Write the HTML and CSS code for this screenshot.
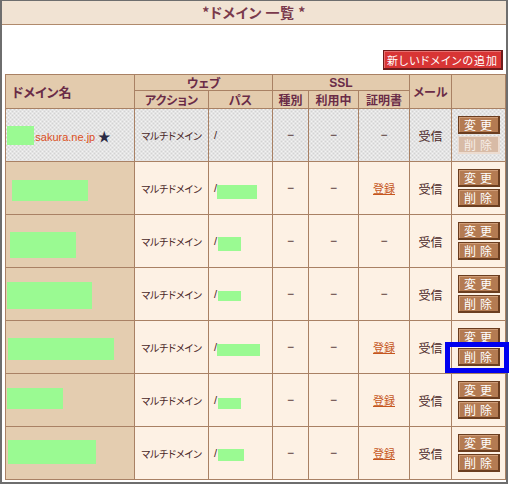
FILE: index.html
```html
<!DOCTYPE html>
<html lang="ja">
<head>
<meta charset="utf-8">
<title>ドメイン一覧</title>
<link rel="stylesheet" href="styles.css">
</head>
<body>
<div class="frame">
  <div class="title">*ドメイン 一覧 *</div>
  <div class="content">
    <div class="actions"><button class="btn-add">新しいドメインの追加</button></div>
    <table class="domains">
      <colgroup>
        <col class="c-name"><col class="c-act"><col class="c-path"><col class="c-type"><col class="c-use"><col class="c-cert"><col class="c-mail"><col class="c-ops">
      </colgroup>
      <thead>
        <tr class="h1">
          <th rowspan="2" class="th-name">ドメイン名</th>
          <th colspan="2">ウェブ</th>
          <th colspan="3" class="ssl">SSL</th>
          <th rowspan="2">メール</th>
          <th rowspan="2"></th>
        </tr>
        <tr class="h2">
          <th>アクション</th><th>パス</th><th>種別</th><th>利用中</th><th>証明書</th>
        </tr>
      </thead>
      <tbody>
        <tr class="primary">
          <td class="name"><span class="dom">www.sakura.ne.jp</span> <span class="star">★</span></td>
          <td class="act">マルチドメイン</td>
          <td class="path">/</td>
          <td class="dash">−</td><td class="dash">−</td><td class="dash">−</td>
          <td class="mail">受信</td>
          <td class="ops"><button class="btn">変更</button><button class="btn disabled">削除</button></td>
        </tr>
        <tr>
          <td class="name"></td>
          <td class="act">マルチドメイン</td>
          <td class="path">/</td>
          <td class="dash">−</td><td class="dash">−</td><td class="cert"><a href="#">登録</a></td>
          <td class="mail">受信</td>
          <td class="ops"><button class="btn">変更</button><button class="btn">削除</button></td>
        </tr>
        <tr>
          <td class="name"></td>
          <td class="act">マルチドメイン</td>
          <td class="path">/</td>
          <td class="dash">−</td><td class="dash">−</td><td class="dash">−</td>
          <td class="mail">受信</td>
          <td class="ops"><button class="btn">変更</button><button class="btn">削除</button></td>
        </tr>
        <tr>
          <td class="name"></td>
          <td class="act">マルチドメイン</td>
          <td class="path">/</td>
          <td class="dash">−</td><td class="dash">−</td><td class="dash">−</td>
          <td class="mail">受信</td>
          <td class="ops"><button class="btn">変更</button><button class="btn">削除</button></td>
        </tr>
        <tr>
          <td class="name"></td>
          <td class="act">マルチドメイン</td>
          <td class="path">/</td>
          <td class="dash">−</td><td class="dash">−</td><td class="cert"><a href="#">登録</a></td>
          <td class="mail">受信</td>
          <td class="ops"><button class="btn">変更</button><button class="btn">削除</button></td>
        </tr>
        <tr>
          <td class="name"></td>
          <td class="act">マルチドメイン</td>
          <td class="path">/</td>
          <td class="dash">−</td><td class="dash">−</td><td class="cert"><a href="#">登録</a></td>
          <td class="mail">受信</td>
          <td class="ops"><button class="btn">変更</button><button class="btn">削除</button></td>
        </tr>
        <tr>
          <td class="name"></td>
          <td class="act">マルチドメイン</td>
          <td class="path">/</td>
          <td class="dash">−</td><td class="dash">−</td><td class="cert"><a href="#">登録</a></td>
          <td class="mail">受信</td>
          <td class="ops"><button class="btn">変更</button><button class="btn">削除</button></td>
        </tr>
      </tbody>
    </table>
  </div>
</div>

<div class="redact" style="left:7px;top:126px;width:27px;height:19px"></div>
<div class="redact" style="left:12px;top:180px;width:76px;height:21px"></div>
<div class="redact" style="left:217px;top:185px;width:40px;height:14px"></div>
<div class="redact" style="left:10px;top:232px;width:66px;height:26px"></div>
<div class="redact" style="left:218px;top:237px;width:23px;height:14px"></div>
<div class="redact" style="left:7px;top:282px;width:85px;height:27px"></div>
<div class="redact" style="left:218px;top:291px;width:23px;height:10px"></div>
<div class="redact" style="left:8px;top:338px;width:106px;height:22px"></div>
<div class="redact" style="left:217px;top:344px;width:43px;height:12px"></div>
<div class="redact" style="left:7px;top:388px;width:56px;height:21px"></div>
<div class="redact" style="left:218px;top:398px;width:23px;height:11px"></div>
<div class="redact" style="left:8px;top:440px;width:88px;height:24px"></div>
<div class="redact" style="left:218px;top:449px;width:26px;height:12px"></div>

<div class="highlight"></div>
</body>
</html>
```

FILE: styles.css
```css
html, body {
  margin: 0;
  padding: 0;
  background: #ffffff;
}
body {
  position: relative;
  width: 509px;
  height: 484px;
  overflow: hidden;
  font-family: "Noto Sans CJK JP", "Liberation Sans", sans-serif;
  font-feature-settings: "palt";
}
.frame {
  width: 508px;
  height: 484px;
  box-sizing: border-box;
  border-style: solid;
  border-color: #6e6e6e;
  border-width: 1px 2px 2px 2px;
  background: #ffffff;
}
.title {
  height: 23px;
  border-bottom: 1px solid #b08a6c;
  background: #f1e3d3;
  color: #7a3a4c;
  font-weight: bold;
  font-size: 14px;
  line-height: 23px;
  text-align: center;
  letter-spacing: 0.5px;
}
.content {
  padding: 25px 1px 0 3px;
}
.actions {
  display: flex;
  justify-content: flex-end;
  padding-right: 2px;
  margin-bottom: 4px;
}
.btn-add {
  height: 20px;
  width: 120px;
  box-sizing: border-box;
  margin: 0;
  padding: 0;
  background: #d83535;
  color: #ffffff;
  border: 1px solid #6e1c1c;
  border-right-width: 2px;
  border-bottom-width: 2px;
  box-shadow: inset 1px 1px 0 #e87070;
  font-family: "Noto Sans CJK JP", sans-serif;
  font-feature-settings: "palt";
  font-size: 11px;
  letter-spacing: 1px;
  line-height: 16px;
  white-space: nowrap;
  text-align: center;
}
.domains {
  border-collapse: collapse;
  table-layout: fixed;
  width: 500px;
}
.c-name { width: 129px; }
.c-act { width: 74px; }
.c-path { width: 64px; }
.c-type { width: 36px; }
.c-use { width: 50px; }
.c-cert { width: 51px; }
.c-mail { width: 42px; }
.c-ops { width: 54px; }
.domains th, .domains td {
  border: 1px solid #a98164;
  padding: 0;
  vertical-align: middle;
}
.domains th {
  background: #e3cbad;
  color: #6a2b47;
  font-weight: bold;
  font-size: 12px;
  text-align: center;
  line-height: 14px;
}
.domains .h1 { height: 16px; }
.domains .h2 { height: 18px; }
.domains th.th-name {
  text-align: left;
  padding-left: 6px;
  font-size: 13px;
}
.domains th.ssl {
  font-family: "Liberation Sans", sans-serif;
  font-size: 12px;
}
.domains tbody tr { height: 53px; }
.domains td {
  background: #fdf1e4;
  color: #4a2828;
  font-size: 11px;
  text-align: center;
}
.domains td.act {
  font-size: 10px;
  letter-spacing: -0.2px;
}
.domains td.name {
  background: #e4cdb0;
  text-align: left;
  padding-left: 3px;
}
.domains td.path {
  text-align: left;
  padding-left: 5px;
  font-family: "Liberation Sans", sans-serif;
}
.domains td.dash {
  font-family: "Liberation Sans", sans-serif;
  font-size: 12px;
}
.domains td.mail { font-size: 12px; }
.domains td.cert a {
  color: #c5561d;
  text-decoration: underline;
  font-size: 11px;
}
.domains tr.primary td {
  background-color: #f3f3f3;
  background-image: radial-gradient(circle, #d2d2d2 0.7px, transparent 0.9px), radial-gradient(circle, #d2d2d2 0.7px, transparent 0.9px);
  background-size: 4px 4px, 4px 4px;
  background-position: 0 0, 2px 2px;
}
.dom {
  font-family: "Liberation Sans", sans-serif;
  color: #dc4f1c;
  font-size: 11px;
}
.star {
  color: #2a2a44;
  font-size: 13px;
}
.ops {
  padding: 0;
}
.btn {
  display: block;
  width: 42px;
  height: 18px;
  box-sizing: border-box;
  margin: 0 auto;
  padding: 0 0 0 4px;
  background: #b47b52;
  color: #ffffff;
  border: 1px solid #6b3e20;
  border-right-width: 2px;
  border-bottom-width: 2px;
  box-shadow: inset 1px 1px 0 #cf9d78;
  font-family: "Noto Sans CJK JP", sans-serif;
  font-size: 12px;
  letter-spacing: 4px;
  line-height: 14px;
}
.btn + .btn { margin-top: 2px; }
.btn.disabled {
  background: #d8bba6;
  border-color: #ecdcd0;
  box-shadow: none;
  color: #f6ede6;
}
.redact {
  position: absolute;
  background: #9afa92;
}
.highlight {
  position: absolute;
  left: 445px;
  top: 342px;
  width: 64px;
  height: 31px;
  box-sizing: border-box;
  border: 5px solid #0000f0;
}
```
